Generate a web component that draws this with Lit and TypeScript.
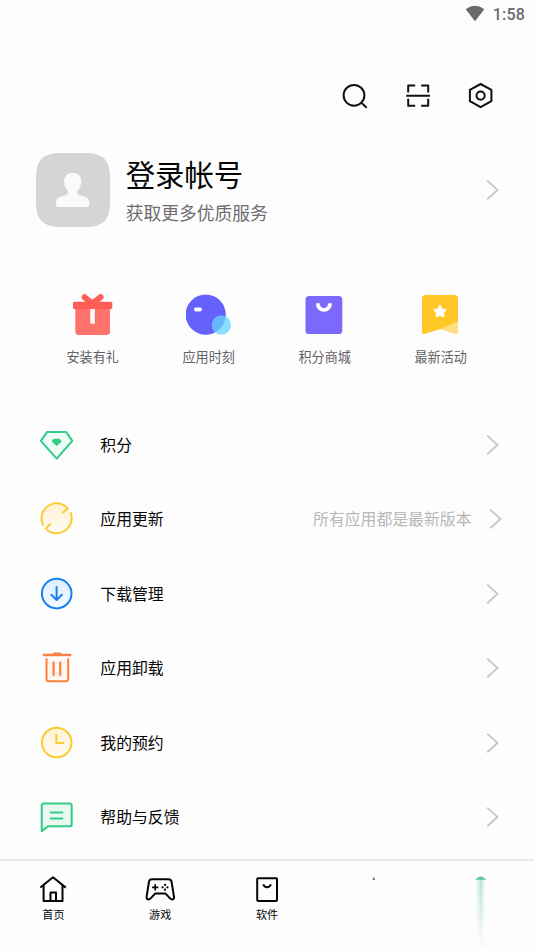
import { LitElement, html, svg, css, nothing } from "lit";
import { customElement, property } from "lit/decorators.js";

const headerIcons = [
  svg`<circle cx="15" cy="15.3" r="10.4"/><path d="M22.3 22.6 27.7 27.8"/>`,
  svg`<path d="M6.2 12.6V5.6h7M19.2 5.6h7v7M6.2 18.8v7h7M19.2 25.8h7v-7M4.2 15.7H28" stroke-linejoin="round"/>`,
  svg`<path d="M15.6 4 26.4 9.9V21.2L15.6 27.2 4.9 21.2V9.9Z" stroke-linejoin="round"/><circle cx="15.6" cy="15.6" r="4.1"/>`,
];

const features = [
  {
    label: "安装有礼",
    icon: svg`
      <path d="M14.6 5.2 22.3 11.6 30.6 5.2" fill="none" stroke="#ff5d57" stroke-width="6" stroke-linecap="round"/>
      <path d="M5.3 15H40V39.5a3.5 3.5 0 0 1-3.5 3.5H8.8a3.5 3.5 0 0 1-3.5-3.5Z" fill="#ff736c"/>
      <rect x="3" y="9.7" width="39.3" height="7.3" rx="1.6" fill="#ff5d57"/>
      <rect x="20.3" y="17" width="4.5" height="14.8" rx=".8" fill="#fff"/>`,
  },
  {
    label: "应用时刻",
    icon: svg`
      <circle cx="19.7" cy="22.6" r="20.1" fill="#6561fb"/>
      <circle cx="35.3" cy="33" r="9.7" fill="#65d3ff" fill-opacity=".76"/>
      <rect x="8" y="15.6" width="8" height="3.8" rx="1.8" fill="#fff"/>`,
  },
  {
    label: "积分商城",
    icon: svg`
      <rect x="3.5" y="4" width="36.8" height="38" rx="3.6" fill="#7c69fb"/>
      <path d="M15.8 11.2v.6a6.1 6.1 0 0 0 12.2 0v-.6" fill="none" stroke="#fff" stroke-width="3.8"/>`,
  },
  {
    label: "最新活动",
    icon: svg`
      <path d="M7.6 3H36.4A3.6 3.6 0 0 1 40 6.6V40.6a1.4 1.4 0 0 1-2 1.3L22.7 37 6 41.9a1.4 1.4 0 0 1-2-1.3V6.6A3.6 3.6 0 0 1 7.6 3Z" fill="#ffc725"/>
      <path d="M22.7 37 40 29.3V40.6a1.4 1.4 0 0 1-2 1.3Z" fill="#ffdf83"/>
      <path d="M22 12.9 24.1 17 28.3 17.7 25.4 20.8 26 25 22 23.2 18 25 18.6 20.8 15.7 17.7 19.9 17Z" fill="#fff" stroke="#fff" stroke-width="1" stroke-linejoin="round"/>`,
  },
];

const menu = [
  {
    label: "积分",
    tone: "green",
    icon: svg`
      <path d="M9.2 5.5H28L34.3 14.5 18.7 32.2 2.8 14.5Z" fill="#effbf6"/>
      <path d="M15.8 13h5.8L23 15 18.7 18.8 14.4 15Z" fill="currentColor" stroke-width="1.2"/>`,
  },
  {
    label: "应用更新",
    note: "所有应用都是最新版本",
    tone: "yellow",
    icon: svg`
      <circle cx="18.7" cy="18.2" r="14.2" fill="url(#warm)" stroke="none"/>
      <path d="M5 24.5A15.05 15.05 0 0 1 30 8.2L25 12M32.7 12.5A15.05 15.05 0 0 1 7.7 28.2L12 23.8"/>`,
  },
  {
    label: "下载管理",
    tone: "blue",
    icon: svg`
      <circle cx="18.7" cy="18.2" r="14.8" fill="url(#cool)"/>
      <path d="M18.6 11.5V24.4M13.4 19.4 18.6 24.6 23.9 19.4"/>`,
  },
  {
    label: "应用卸载",
    tone: "orange",
    icon: svg`
      <path d="M8.5 9.6V29.6a2.2 2.2 0 0 0 2.2 2.2H28a2.2 2.2 0 0 0 2.2-2.2V9.6" fill="#fff5ef"/>
      <path d="M5.9 5.6H32.2M16 4.2H22.2" stroke-width="2.4"/>
      <path d="M15.6 13.2V25.5M22.2 13.2V25.5" stroke-width="2.2"/>`,
  },
  {
    label: "我的预约",
    tone: "yellow",
    icon: svg`
      <circle cx="18.7" cy="18.1" r="14.8" fill="url(#warm)"/>
      <path d="M18.3 10V18.7H25.4"/>`,
  },
  {
    label: "帮助与反馈",
    tone: "green",
    icon: svg`
      <path d="M5.4 5.2H32a1.7 1.7 0 0 1 1.7 1.7V26a1.8 1.8 0 0 1-1.8 1.8H10.3L3.7 32.7V6.9a1.7 1.7 0 0 1 1.7-1.7Z" fill="#e9f9f2"/>
      <path d="M12.8 14H24.4M12.8 20H24.4"/>`,
  },
];

const tabs = [
  {
    label: "首页",
    icon: svg`<path d="M3.3 14.6 16 4.2 28.8 14.6M6.6 12.5V28H25.5V12.5M13.5 28V19.4H19V28"/>`,
  },
  {
    label: "游戏",
    icon: svg`
      <path d="M8 6.2H24.6a3 3 0 0 1 2.9 2.3L30 23.8c.4 2.8-2.4 3.4-3.9 1.6l-4.8-5H11.4l-4.8 5C5 27.2 2.2 26.6 2.6 23.8L5 8.5A3 3 0 0 1 8 6.2Z"/>
      <path d="M11.2 11.2v6.2M8.1 14.3h6.2" stroke-width="1.7"/>
      <g fill="currentColor" stroke="none">
        <circle cx="21" cy="11.9" r="1.15"/><circle cx="21" cy="16.7" r="1.15"/>
        <circle cx="18.6" cy="14.3" r="1.15"/><circle cx="23.4" cy="14.3" r="1.15"/>
      </g>`,
  },
  {
    label: "软件",
    icon: svg`<rect x="6.2" y="5.2" width="19.8" height="22.7" rx=".8"/><path d="M12.2 11.4c1.5 3.8 6.2 3.8 7.7 0"/>`,
  },
];

const chevron = html`<svg class="chevron" width="14" height="22" viewBox="0 0 14 22">
  <path d="M2.2 1.6 12.5 10.9 2.2 20.2" />
</svg>`;

@customElement("menu-row")
class MenuRow extends LitElement {
  @property() label = "";
  @property() note?: string;
  @property() tone = "green";
  @property({ attribute: false }) icon: unknown;

  static styles = css`
    :host {
      display: flex;
      align-items: center;
      height: 74.5px;
      padding: 0 35px 0 38px;
    }
    .icon {
      flex: none;
      fill: none;
      stroke: currentColor;
      stroke-width: 2;
      stroke-linecap: round;
      stroke-linejoin: round;
    }
    .green { color: #30cd88; }
    .yellow { color: #fbcb32; }
    .blue { color: #1681ee; }
    .orange { color: #fa8141; }
    .label {
      flex: 1;
      margin-left: 24.3px;
      font-size: 15.85px;
      color: #050505;
    }
    .note {
      font-size: 15.85px;
      color: #b7b6b8;
      margin-right: 16.5px;
    }
    .chevron {
      display: block;
      flex: none;
      fill: none;
      stroke: #c8c7c9;
      stroke-width: 1.9;
    }
    .noted {
      margin-right: -3px;
    }
  `;

  render() {
    return html`
      <svg class="icon ${this.tone}" width="38" height="38" viewBox="0 -0.4 38 38">
        <defs>
          <linearGradient id="warm" x1="0" y1="0" x2="0" y2="1">
            <stop offset="0" stop-color="#fff2d2" /><stop offset="1" stop-color="#fffcf6" />
          </linearGradient>
          <linearGradient id="cool" x1="0" y1="0" x2="0" y2="1">
            <stop offset="0" stop-color="#dcedff" /><stop offset="1" stop-color="#f6faff" />
          </linearGradient>
        </defs>
        ${this.icon}
      </svg>
      <span class="label">${this.label}</span>
      ${this.note ? html`<span class="note">${this.note}</span>` : nothing}
      <span class=${this.note ? "noted" : ""}>${chevron}</span>
    `;
  }
}

@customElement("app-root")
class AppRoot extends LitElement {
  static styles = css`
    :host {
      display: flex;
      flex-direction: column;
      box-sizing: border-box;
      width: 100%;
      height: 949px;
      overflow: hidden;
      background: #fefdfe;
      color: #050505;
      font-family: "Noto Sans CJK SC", sans-serif;
      line-height: 1;
    }
    svg { display: block; flex: none; }
    .status {
      display: flex;
      justify-content: flex-end;
      align-items: center;
      height: 28px;
      gap: 8px;
      padding-right: 9px;
      color: #6b6a6c;
      font: 500 16px/28px Roboto, sans-serif;
      letter-spacing: 0.2px;
    }
    .status span { padding-top: 2px; line-height: 26px; }
    .actions {
      display: flex;
      justify-content: flex-end;
      gap: 31px;
      padding: 52px 37px 0 0;
    }
    .actions svg {
      fill: none;
      stroke: #111;
      stroke-width: 2;
    }
    .profile {
      display: flex;
      align-items: center;
      height: 74px;
      margin-top: 41px;
      padding: 0 35px 0 36px;
    }
    .who { flex: 1; margin-left: 15.7px; }
    .name { font-size: 29.4px; line-height: 34px; padding-bottom: 6px; }
    .hint { font-size: 17.75px; line-height: 24px; color: #6e6d6f; margin-top: 4px; }
    .chevron { fill: none; stroke: #c8c7c9; stroke-width: 1.9; }
    .features {
      display: grid;
      grid-template-columns: repeat(4, 116px);
      margin: 65px 0 0 35px;
    }
    .feature {
      display: flex;
      flex-direction: column;
      align-items: center;
      gap: 9px;
      font-size: 13.1px;
      line-height: 20px;
      color: #626163;
    }
    .feature span { margin-right: 0.6px; }
    .menu { margin-top: 40.5px; }
    .tabs {
      display: grid;
      grid-template-columns: repeat(5, 1fr);
      flex: 1;
      margin-top: 4.5px;
      padding-top: 12px;
      border-top: 2px solid #e9e8ea;
    }
    .tab {
      display: flex;
      flex-direction: column;
      align-items: center;
      font-size: 11.1px;
      line-height: 18px;
    }
    .tab svg {
      fill: none;
      stroke: currentColor;
      stroke-width: 2;
      stroke-linejoin: round;
    }
  `;

  render() {
    return html`
      <div class="status">
        <svg width="20" height="18" viewBox="0 0 20 18">
          <path d="M.7 4.2Q10-2.6 19.3 4.2L10 16.2Z" fill="currentColor" />
        </svg>
        <span>1:58</span>
      </div>
      <div class="actions">
        ${headerIcons.map((i) => html`<svg width="32" height="32" viewBox="0 0 32 32">${i}</svg>`)}
      </div>
      <div class="profile">
        <svg width="74" height="74" viewBox="0 0 74 74">
          <path d="M25 0H49C67 0 74 7 74 25V49C74 67 67 74 49 74H25C7 74 0 67 0 49V25C0 7 7 0 25 0Z" fill="#d5d4d6" />
          <path d="M36.7 19.7c5.5 0 8.7 3.6 8.5 8.8-.2 4.3-1.6 7.2-3.8 9.3-.8 2.5.4 3.6 3 4.5 5.6 2 8.8 2.5 8.8 6.7v3.4q0 1.6-1.6 1.6H21.7q-1.6 0-1.6-1.6V49c0-4.2 3.2-4.7 8.8-6.7 2.6-.9 3.8-2 3-4.5-2.2-2.1-3.6-5-3.8-9.3-.2-5.2 3.1-8.8 8.600-8.800Z" fill="#faf9fb" />
        </svg>
        <div class="who">
          <div class="name">登录帐号</div>
          <div class="hint">获取更多优质服务</div>
        </div>
        ${chevron}
      </div>
      <div class="features">
        ${features.map(
          (f) => html`<div class="feature">
            <svg width="46" height="46" viewBox="0 0 46 46">${f.icon}</svg>
            <span>${f.label}</span>
          </div>`
        )}
      </div>
      <div class="menu">
        ${menu.map(
          (m) => html`<menu-row .label=${m.label} .note=${m.note} .tone=${m.tone} .icon=${m.icon}></menu-row>`
        )}
      </div>
      <div class="tabs">
        ${tabs.map(
          (t) => html`<div class="tab">
            <svg width="32" height="32" viewBox="0 0 32 32">${t.icon}</svg>
            <span>${t.label}</span>
          </div>`
        )}
        <div class="tab">
          <svg width="32" height="32" viewBox="0 0 32 32">
            <path d="M14.5 7 15.4 4.3h.9L17.2 7Z" fill="#777" stroke="none" />
          </svg>
        </div>
        <div class="tab">
          <svg width="32" height="74" viewBox="0 0 32 74">
            <defs>
              <linearGradient id="fade" x1="0" y1="0" x2="0" y2="1">
                <stop offset="0" stop-color="#fefdfe" stop-opacity="0" />
                <stop offset="1" stop-color="#fefdfe" />
              </linearGradient>
              <linearGradient id="beam" x1="0" y1="0" x2="1" y2="0">
                <stop offset="0" stop-color="#d9f4e5" stop-opacity="0" />
                <stop offset=".3" stop-color="#d9f3e5" />
                <stop offset=".5" stop-color="#b8dccd" />
                <stop offset=".7" stop-color="#d9f3e5" />
                <stop offset="1" stop-color="#d9f4e5" stop-opacity="0" />
              </linearGradient>
            </defs>
            <rect x="10.2" y="6" width="11" height="67" fill="url(#beam)" stroke="none" />
            <rect x="9" y="6" width="13" height="68" fill="url(#fade)" stroke="none" />
            <path d="M10.3 6.8Q15.7.2 21.2 6.8Z" fill="#5cc79b" stroke="none" />
          </svg>
        </div>
      </div>
    `;
  }
}
